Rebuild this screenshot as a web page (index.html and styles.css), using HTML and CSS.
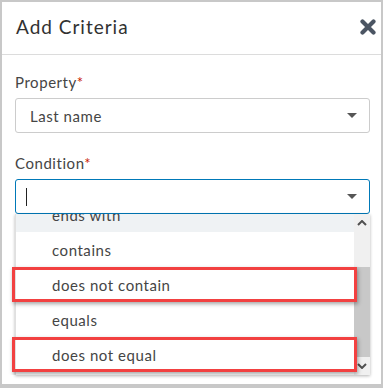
FILE: index.html
```html
<!DOCTYPE html>
<html>
<head>
<meta charset="utf-8">
<link rel="stylesheet" href="styles.css">
</head>
<body>
<div class="modal">
  <div class="header">
    <div class="title">Add Criteria</div>
    <svg class="close" width="16" height="16" viewBox="0 0 16 16">
      <path d="M2.5 2.5 L13.5 13.5 M13.5 2.5 L2.5 13.5" stroke="#4b5563" stroke-width="4.2" stroke-linecap="round"/>
    </svg>
  </div>
  <div class="body">
    <div class="field">
      <div class="label">Property<span class="req">*</span></div>
      <div class="select">
        <span class="value">Last name</span>
        <span class="caret"></span>
      </div>
    </div>
    <div class="field">
      <div class="label">Condition<span class="req">*</span></div>
      <div class="select focused">
        <span class="cursor"></span>
        <span class="caret"></span>
      </div>
      <div class="dropdown">
        <div class="list">
          <div class="item hover first">ends with</div>
          <div class="item">contains</div>
          <div class="item marked">does not contain</div>
          <div class="item">equals</div>
          <div class="item marked">does not equal</div>
        </div>
        <div class="scrollbar">
          <div class="sb-btn up"><svg width="10" height="6" viewBox="0 0 10 6"><path d="M1 5 L5 1 L9 5" fill="none" stroke="#505050" stroke-width="2"/></svg></div>
          <div class="sb-gap"></div>
          <div class="sb-thumb"></div>
          <div class="sb-btn down"><svg width="10" height="6" viewBox="0 0 10 6"><path d="M1 1 L5 5 L9 1" fill="none" stroke="#505050" stroke-width="2"/></svg></div>
        </div>
      </div>
    </div>
  </div>
</div>
</body>
</html>
```
FILE: styles.css
```css
html, body {
  margin: 0;
  padding: 0;
}
body {
  background: #c8c8c8;
  width: 383px;
  height: 388px;
  overflow: hidden;
  font-family: Lato, "Open Sans", sans-serif;
}
.modal {
  margin: 2px 0 0 2px;
  width: 379px;
  height: 382px;
  background: #fff;
  display: flex;
  flex-direction: column;
}
.header {
  height: 52px;
  border-bottom: 1px solid #dcdcdc;
  display: flex;
  align-items: center;
  justify-content: space-between;
  padding: 0 5px 0 14px;
  flex-shrink: 0;
}
.title {
  font-size: 19px;
  color: #313131;
  letter-spacing: 1px;
  padding-bottom: 3px;
}
.close {
  margin-bottom: 2px;
}
.body {
  padding: 17px 11px 0 13px;
  display: flex;
  flex-direction: column;
  gap: 20px;
}
.field {
  display: flex;
  flex-direction: column;
}
.label {
  font-size: 15px;
  color: #454545;
  line-height: 20px;
  margin-bottom: 6px;
  letter-spacing: 0.55px;
}
.req {
  color: #c92100;
}
.select {
  height: 33px;
  border: 1px solid #cccccc;
  border-radius: 3px;
  display: flex;
  align-items: center;
  justify-content: space-between;
  padding: 0 12px 0 14px;
}
.select.focused {
  border-color: #0079b8;
  padding-left: 10px;
}
.value {
  font-size: 15px;
  color: #454545;
  letter-spacing: 0.55px;
}
.cursor {
  width: 1px;
  height: 18px;
  background: #222;
}
.caret {
  width: 0;
  height: 0;
  border-left: 5px solid transparent;
  border-right: 5px solid transparent;
  border-top: 5px solid #565656;
}
.dropdown {
  height: 161px;
  display: flex;
  border-left: 1px solid #e0e0e0;
  box-shadow: 0 1px 3px rgba(0,0,0,0.3);
}
.list {
  flex: 1;
  overflow-x: visible;
  overflow-y: clip;
  display: flex;
  flex-direction: column;
}
.item {
  height: 35px;
  flex-shrink: 0;
  display: flex;
  align-items: center;
  padding-left: 36px;
  font-size: 15px;
  color: #454545;
  letter-spacing: 0.55px;
  position: relative;
}
.item.first {
  margin-top: -17px;
}
.item.hover {
  background: #eff2f4;
}
.item.marked::after {
  content: "";
  position: absolute;
  z-index: 2;
  top: 0;
  bottom: 0;
  left: -4px;
  right: -3px;
  border: 3px solid #f24141;
  box-shadow: 1px 2px 4px rgba(0,0,0,0.35);
}
.scrollbar {
  width: 16px;
  background: #f0f0f0;
  display: flex;
  flex-direction: column;
}
.sb-btn {
  height: 17px;
  display: flex;
  align-items: center;
  justify-content: center;
  flex-shrink: 0;
}
.sb-btn.down {
  height: 18px;
}
.sb-gap {
  height: 36px;
}
.sb-thumb {
  height: 90px;
  background: #c8c8c8;
}
```
